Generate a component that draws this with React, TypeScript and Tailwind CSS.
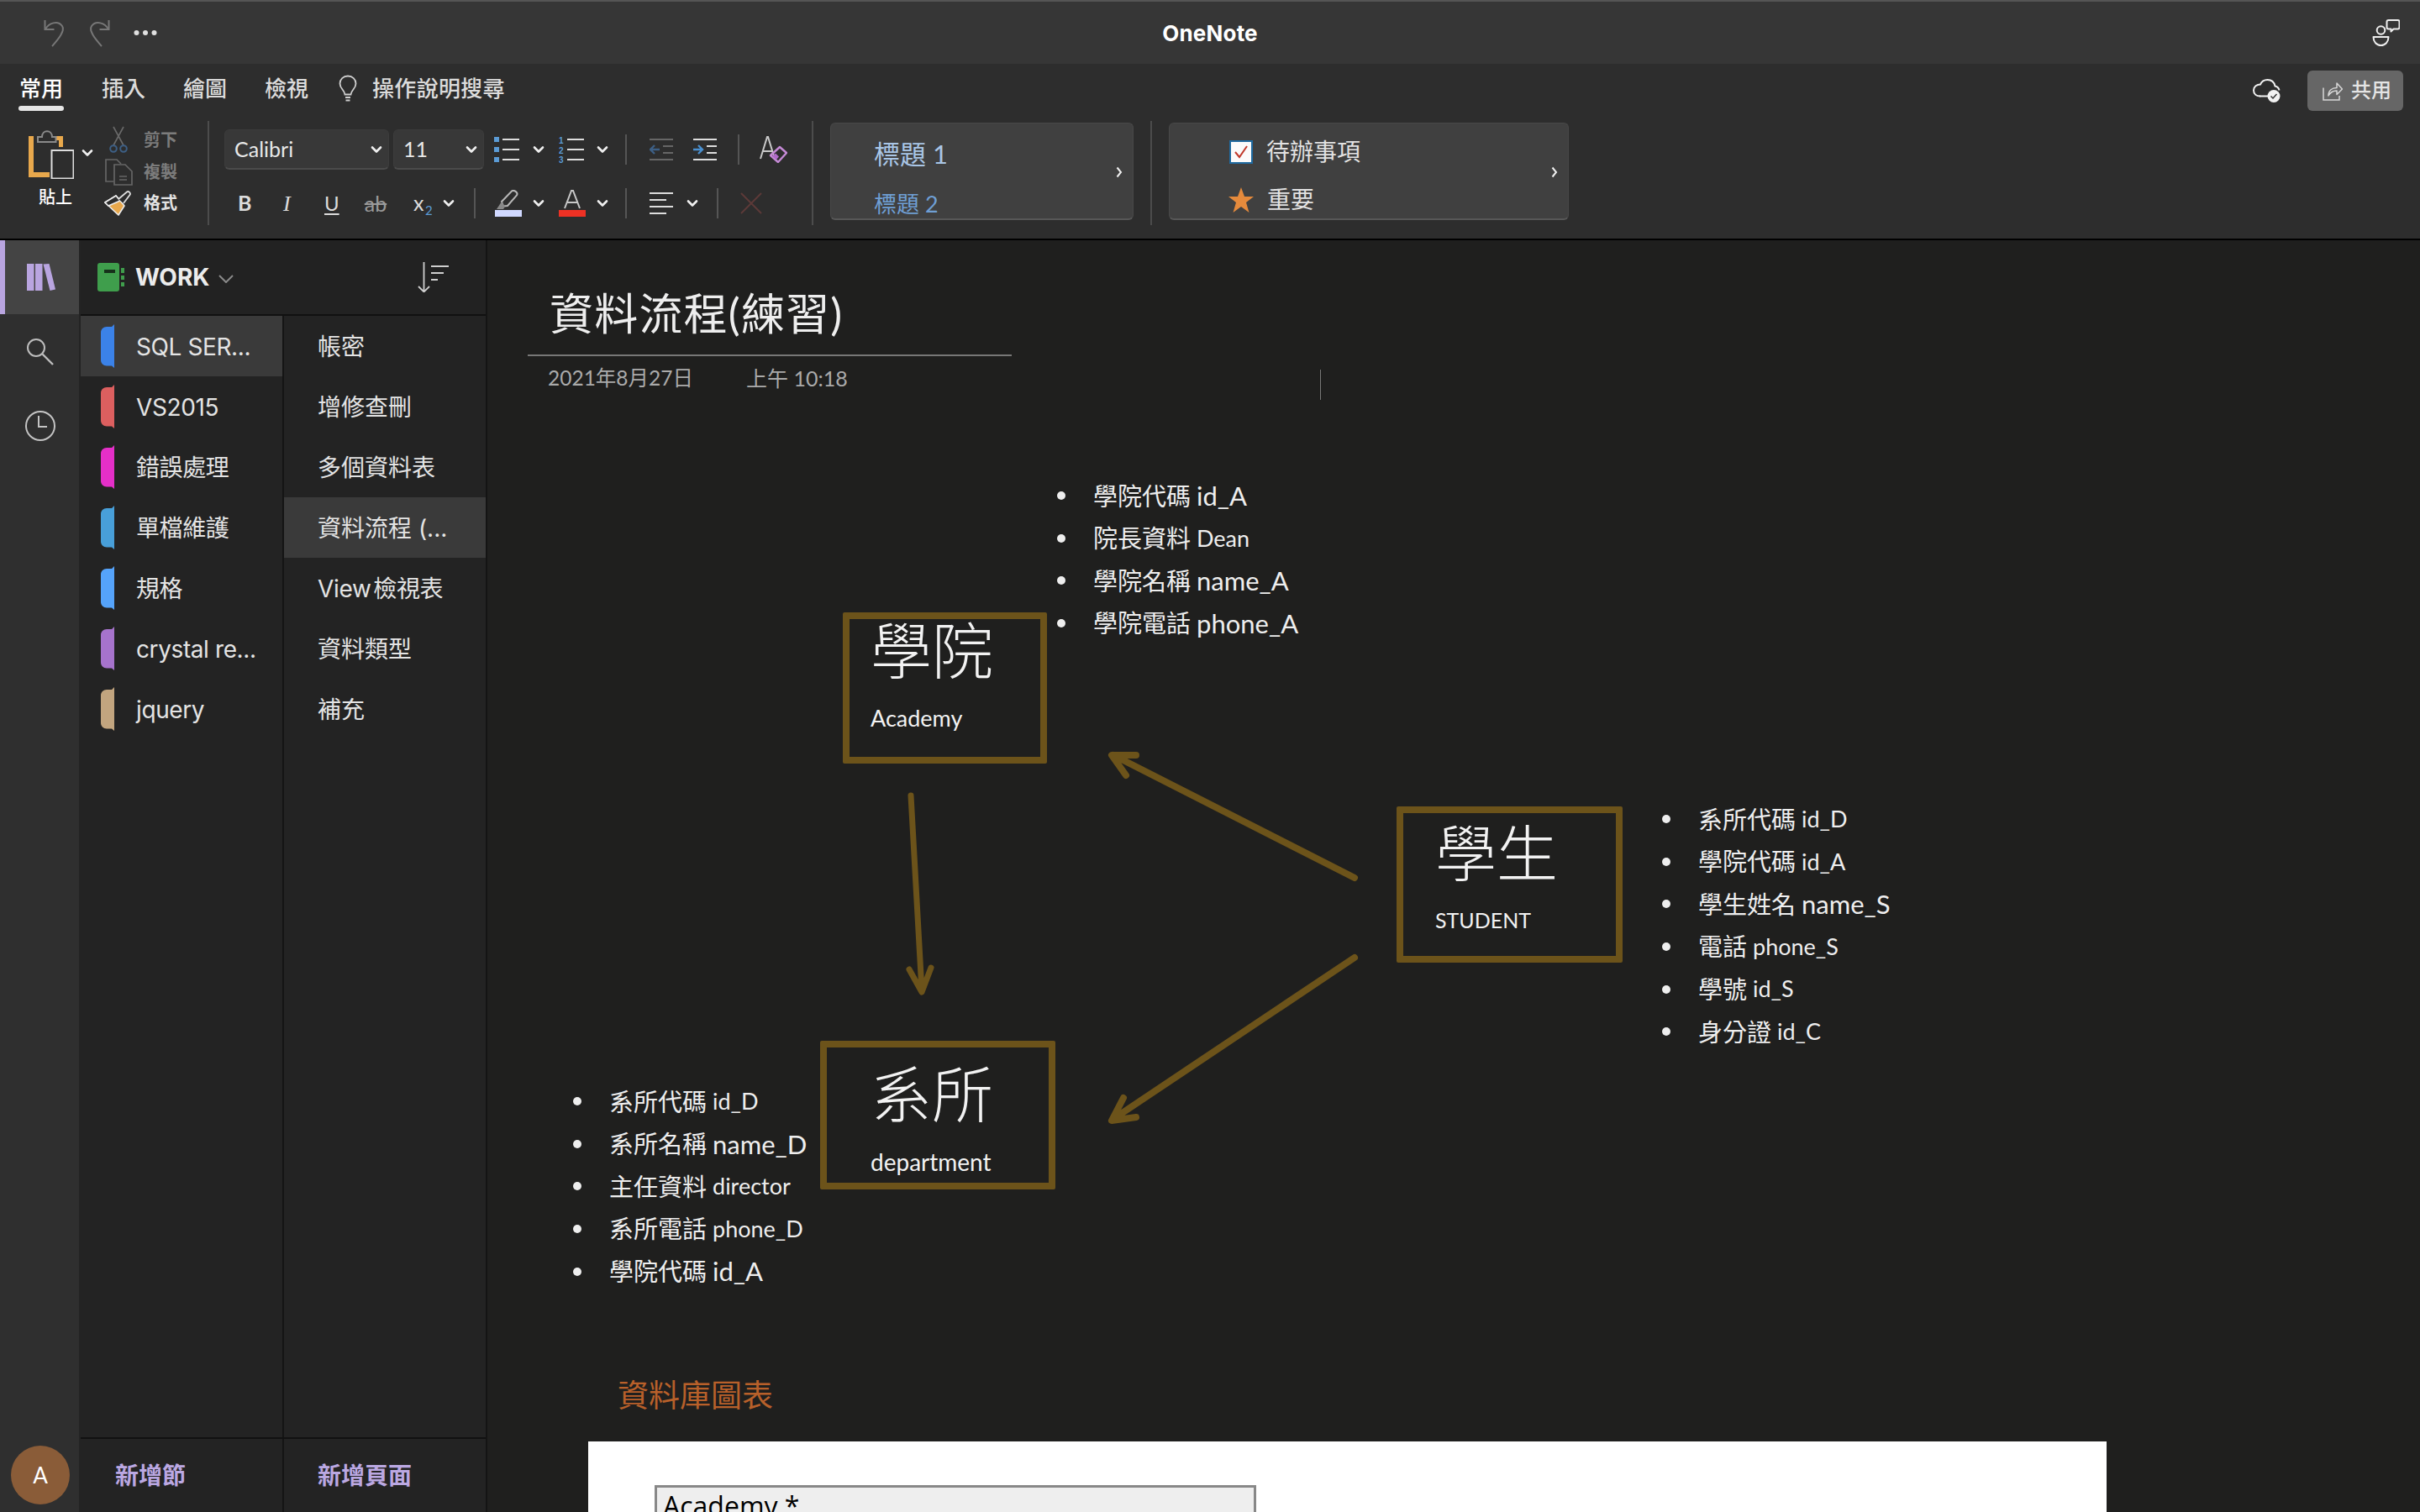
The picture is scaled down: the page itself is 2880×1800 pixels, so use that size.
import React from "react";

const Chev = ({ className = "" }: { className?: string }) => (
  <svg width="14" height="10" viewBox="0 0 14 10" className={className} fill="none" stroke="#f0f0f0" strokeWidth="2.6" strokeLinecap="round" strokeLinejoin="round">
    <path d="M2 2.5 7 7.5 12 2.5" />
  </svg>
);
const VSep = ({ className = "" }: { className?: string }) => <div className={"w-[2px] h-[36px] bg-[#555] shrink-0 " + className} />;

const Undo = ({ flip }: { flip?: boolean }) => (
  <svg width="26" height="33" viewBox="0 0 26 33" fill="none" stroke="#777" strokeWidth="2" className={flip ? "-scale-x-100" : ""}>
    <path d="M1.5 1v11h11" />
    <path d="M2 12C6 4 17 1 22 8c4 6-6 17-12 24" />
  </svg>
);

function TitleBar() {
  return (
    <div className="relative h-[76px] shrink-0 bg-[#363636] border-t-2 border-[#555] flex items-center pl-[52px] pr-[24px]">
      <Undo />
      <div className="ml-[27px]"><Undo flip /></div>
      <svg width="28" height="8" viewBox="0 0 28 8" className="ml-[28px]" fill="#e0e0e0">
        <circle cx="3.5" cy="4" r="3" /><circle cx="14" cy="4" r="3" /><circle cx="24.5" cy="4" r="3" />
      </svg>
      <div className="absolute left-0 right-0 text-center text-[26px] font-bold text-white tracking-[0.2px]">OneNote</div>
      <div className="flex-1" />
      <svg width="33" height="33" viewBox="0 0 33 33" fill="none" stroke="#eee" strokeWidth="2">
        <circle cx="10.5" cy="13" r="4.8" />
        <path d="M1.5 21h18c0 6-4 10-9 10s-9-4-9-10Z" strokeLinejoin="round" />
        <path d="M19.5 1h11a2 2 0 0 1 2 2v6.500a2 2 0 0 1-2 2h-5l-3 3v-3h-3a2 2 0 0 1-2-2V3a2 2 0 0 1 2-2Z" strokeLinejoin="round" />
      </svg>
    </div>
  );
}

function Tabs() {
  return (
    <div className="h-[68px] shrink-0 flex items-start pt-[13px] text-[26px] leading-[34px] font-medium text-[#dcdcdc] relative">
      <div className="ml-[22px] w-[54px] flex flex-col items-center text-white">
        <span>常用</span>
        <div className="w-[54px] h-[6px] rounded-full bg-[#e6e6e6] mt-[3px]" />
      </div>
      <span className="ml-[45px]">插入</span>
      <span className="ml-[45px]">繪圖</span>
      <span className="ml-[45px]">檢視</span>
      <svg width="24" height="32" viewBox="0 0 24 32" className="ml-[35px]" fill="none" stroke="#cfcfcf" strokeWidth="1.8">
        <path d="M12 1.500c-5.500 0-9.500 4-9.500 9 0 6 5.500 7.500 6 13h7c.5-5.500 6-7 6-13 0-5-4-9-9.500-9Z" />
        <path d="M9 27h6M9.500 30.500h5" strokeWidth="2" />
      </svg>
      <span className="ml-[17px] tracking-[0.3px]">操作說明搜尋</span>
      <div className="absolute right-[20px] top-[8px] flex items-center">
        <svg width="36" height="30" viewBox="0 0 36 30" fill="none">
          <path d="M10 21.500c-4.500 0-8-2.500-8-7s4-7 8-7c1.500-3.500 4.500-5.500 8.500-5.500 5 0 8 3 9 7.500 2.500.5 4.500 2 5 5" stroke="#f2f2f2" strokeWidth="2" />
          <path d="M9 21.500h14" stroke="#f2f2f2" strokeWidth="2" />
          <circle cx="26" cy="21.500" r="7.500" fill="#f2f2f2" />
          <path d="M22.500 21.500l2.500 2.500 4.500-5" stroke="#333" strokeWidth="1.500" />
        </svg>
        <div className="ml-[30px] w-[114px] h-[48px] rounded-[6px] bg-[#666] flex items-center pl-[18px] text-[24px] text-[#e4e4e4] font-medium">
          <svg width="24" height="24" viewBox="0 0 24 24" fill="none" stroke="#d8d8d8" strokeWidth="1.500">
            <path d="M1 8.500V23h19v-5" />
            <path d="M7 18c0-6 4-9.500 10-9.500V3l6.500 7-6.500 6.500V12c-4 0-7.500 1.500-10 6Z" strokeLinejoin="round" />
          </svg>
          <span className="ml-[10px]">共用</span>
        </div>
      </div>
    </div>
  );
}

function Clipboard() {
  return (
    <div className="flex pl-[34px] w-[247px] shrink-0 h-[124px]">
      <div className="w-[54px] flex flex-col mt-[10px]">
        <svg width="54" height="59" viewBox="0 0 54 59" fill="none">
          <path d="M0 8h6v43h19v6H0Z M28 8h13v13h-5v-8h-8Z" fill="#e8a84c" />
          <path d="M11 15V9h5c0-9 12-9 12 0h4.500v6Z" stroke="#8a8a8a" strokeWidth="2" fill="#2d2d2d" />
          <rect x="27.500" y="25" width="26" height="33.500" fill="#2d2d2d" stroke="#dedede" strokeWidth="2" />
        </svg>
        <div className="mt-[11px] ml-[12px] text-[20px] leading-[22px] font-medium text-white whitespace-nowrap">貼上</div>
      </div>
      <Chev className="ml-[9px] mt-[33px]" />
      <div className="ml-[14px] flex flex-col w-[90px] mt-[3px]">
        <div className="h-[39px] flex items-center">
          <svg width="24" height="33" viewBox="0 0 24 33" fill="none" className="ml-[4px]">
            <path d="M6 1l12 22M18 1 6 23" stroke="#6a6a6a" strokeWidth="1.600" />
            <circle cx="6" cy="27" r="3.800" stroke="#3d5f85" strokeWidth="2" />
            <circle cx="18" cy="27" r="3.800" stroke="#3d5f85" strokeWidth="2" />
          </svg>
          <span className="ml-[18px] text-[20px] font-bold text-[#7c7c7c]">剪下</span>
        </div>
        <div className="h-[37px] flex items-center">
          <svg width="33" height="32" viewBox="0 0 33 32" fill="none" stroke="#666" strokeWidth="1.700">
            <path d="M10 27H1V1h13l5 5" />
            <path d="M11 7h13l8 8v16H11Z" />
            <path d="M17 21h9M17 25h9" />
          </svg>
          <span className="ml-[13px] text-[20px] font-bold text-[#7c7c7c]">複製</span>
        </div>
        <div className="h-[37px] flex items-center -ml-[1px]">
          <svg width="33" height="30" viewBox="0 0 33 30" fill="none">
            <path d="M1 14 14 6l10 12-7 11Z" fill="#e8a84c" stroke="#eee" strokeWidth="1.600" strokeLinejoin="round" />
            <path d="M1 14 14 6l5 6L5 18Z" fill="#2d2d2d" stroke="#eee" strokeWidth="1.600" />
            <path d="M17 10 27 1.500c2-1.500 5 1.500 3.500 3.500L23 15" fill="#2d2d2d" stroke="#ddd" strokeWidth="1.800" />
          </svg>
          <span className="ml-[14px] text-[20px] font-bold text-[#e2e2e2]">格式</span>
        </div>
      </div>
    </div>
  );
}

const Combo = ({ w, label }: { w: string; label: string }) => (
  <div className={"h-[48px] rounded-[6px] bg-[#383838] border border-[#3c3c3c] border-b-2 border-b-[#4b4b4b] flex items-center justify-between pl-[11px] pr-[7px] text-[25px] text-[#e8e8e8] font-['Lato','Noto_Sans',sans-serif] " + w}>
    <span>{label}</span>
    <Chev />
  </div>
);

function BulletList() {
  return (
    <svg width="34" height="30" viewBox="0 0 34 30">
      <path d="M0 0h6v6H0zM0 12h6v6H0zM0 24h6v6H0z" fill="#5b9bd5" />
      <path d="M10 3h20M10 15h20M10 27h20" stroke="#ddd" strokeWidth="2" />
    </svg>
  );
}
function NumList() {
  return (
    <svg width="34" height="32" viewBox="0 0 34 32">
      <text x="0" y="9" fontSize="10" fontWeight="700" fontFamily="Liberation Sans" fill="#5b9bd5">1</text>
      <text x="0" y="21" fontSize="10" fontWeight="700" fontFamily="Liberation Sans" fill="#5b9bd5">2</text>
      <text x="0" y="32" fontSize="10" fontWeight="700" fontFamily="Liberation Sans" fill="#5b9bd5">3</text>
      <path d="M10 4h20M10 16h20M10 28h20" stroke="#ddd" strokeWidth="2" />
    </svg>
  );
}
const Indent = ({ out }: { out?: boolean }) => (
  <svg width="28" height="26" viewBox="0 0 28 26" fill="none">
    <g stroke={out ? "#666" : "#ddd"} strokeWidth="2">
      <path d="M0 1h28M0 25h28M16 9h12M16 17h12" />
    </g>
    {out ? (
      <path d="M12 13H1M6 8 1 13l5 5" stroke="#3d5f85" strokeWidth="2.400" />
    ) : (
      <path d="M0 13h11M6 8l5 5-5 5" stroke="#4a90d0" strokeWidth="2.400" />
    )}
  </svg>
);

function FontRows() {
  return (
    <div className="flex flex-col w-[698px] ml-[18px] mr-[1px] shrink-0 pt-[10px]">
      <div className="flex items-center h-[48px]">
        <Combo w="w-[196px]" label="Calibri" />
        <Combo w="w-[108px] ml-[5px]" label="11" />
        <div className="ml-[12px]"><BulletList /></div>
        <Chev className="ml-[12px]" />
        <div className="ml-[17px]"><NumList /></div>
        <Chev className="ml-[11px]" />
        <VSep className="ml-[20px]" />
        <div className="ml-[27px]"><Indent out /></div>
        <div className="ml-[24px]"><Indent /></div>
        <VSep className="ml-[25px]" />
        <svg width="33" height="32" viewBox="0 0 33 32" fill="none" className="ml-[24px]">
          <path d="M1 27 9 1h1l8 26M4 18h11" stroke="#c9c9c9" strokeWidth="2" />
          <path d="M13 23 24 13l8 7-10 11Z" stroke="#c58ad6" strokeWidth="2.400" strokeLinejoin="round" />
          <path d="M15 24l4-3.500 4 4-3 3.500Z" fill="#b06ac8" />
        </svg>
      </div>
      <div className="flex items-center h-[36px] mt-[22px] text-[#dcdcdc]">
        <span className="ml-[16px] w-[16px] text-[25px] font-bold font-['Lato',sans-serif]">B</span>
        <span className="ml-[38px] w-[14px] text-[26px] italic font-['Liberation_Serif',serif]">I</span>
        <span className="ml-[35px] w-[18px] text-[24px] underline underline-offset-[3px] font-['Lato',sans-serif]">U</span>
        <span className="ml-[27px] w-[32px] text-[25px] line-through text-[#9a9a9a] font-['Lato',sans-serif] text-center leading-none">ab</span>
        <span className="ml-[29px] w-[18px] text-[25px] font-['Lato',sans-serif] relative">x<span className="absolute left-[14px] top-[16px] text-[15px] text-[#5b9bd5]">2</span></span>
        <Chev className="ml-[17px]" />
        <VSep className="ml-[23px]" />
        <svg width="32" height="32" viewBox="0 0 32 32" fill="none" className="ml-[23px]">
          <path d="M8 14 20 1.500c3-2 8 2 6 5L15 19l-5 .5Z" stroke="#b8b8b8" strokeWidth="2" />
          <path d="M2 23l6-9 4 6-2 3Z" fill="#888" />
          <rect x="0" y="24" width="32" height="8" fill="#d0d8ff" />
        </svg>
        <Chev className="ml-[13px]" />
        <svg width="32" height="32" viewBox="0 0 32 32" fill="none" className="ml-[17px]">
          <path d="M7 22 15 1h2l8 21M10 15h12" stroke="#c8c8c8" strokeWidth="2" />
          <rect x="0" y="24" width="32" height="8" fill="#ee3124" />
        </svg>
        <Chev className="ml-[13px]" />
        <VSep className="ml-[20px]" />
        <svg width="28" height="26" viewBox="0 0 28 26" className="ml-[27px]" stroke="#ddd" strokeWidth="2">
          <path d="M0 1h28M0 9h20M0 17h28M0 25h20" />
        </svg>
        <Chev className="ml-[16px]" />
        <VSep className="ml-[22px]" />
        <svg width="26" height="26" viewBox="0 0 26 26" className="ml-[26px]" fill="none" stroke="#5c3a38" strokeWidth="2">
          <path d="M1 1l24 24M25 1 1 25" />
        </svg>
      </div>
    </div>
  );
}

const GalleryBox = ({ w, children }: { w: string; children: React.ReactNode }) => (
  <div className={"relative h-[116px] mt-[2px] rounded-[6px] bg-[#404040] border border-[#484848] border-b-2 border-b-[#575757] overflow-hidden shrink-0 " + w}>
    {children}
    <svg width="8" height="14" viewBox="0 0 8 14" fill="none" stroke="#f0f0f0" strokeWidth="2" className="absolute right-[12px] top-[51px]">
      <path d="M1.500 1.500 6 7l-4.500 5.500" />
    </svg>
  </div>
);

function ToolRow() {
  return (
    <div className="h-[124px] flex shrink-0">
      <Clipboard />
      <div className="w-[2px] h-[124px] bg-[#4c4c4c] shrink-0" />
      <FontRows />
      <div className="w-[2px] h-[124px] bg-[#4c4c4c] shrink-0" />
      <div className="ml-[20px]">
        <GalleryBox w="w-[361px]">
          <div className="pl-[51px] pt-[14px] text-[31px] leading-[44px] text-[#a9c6e6] font-['Lato','Noto_Sans_CJK_TC',sans-serif]">標題 1</div>
          <div className="pl-[51px] pt-[20px] text-[27px] leading-[36px] text-[#6f9fd4] font-['Lato','Noto_Sans_CJK_TC',sans-serif]">標題 2</div>
        </GalleryBox>
      </div>
      <div className="ml-[20px] w-[2px] h-[124px] bg-[#4c4c4c] shrink-0" />
      <div className="ml-[20px]">
        <GalleryBox w="w-[476px]">
          <div className="flex items-center pl-[71px] pt-[15px] h-[52px] text-[28px] text-[#e2e2e2]">
            <svg width="28" height="28" viewBox="0 0 28 28" fill="none">
              <rect x="1" y="1" width="26" height="26" fill="#fbfbfb" stroke="#1f6aa0" strokeWidth="2" />
              <path d="M7 14l5 6 9-13" stroke="#c0392b" strokeWidth="2" />
            </svg>
            <span className="ml-[16px]">待辦事項</span>
          </div>
          <div className="flex items-center pl-[70px] mt-[21px] h-[36px] text-[28px] text-[#e2e2e2]">
            <svg width="30" height="30" viewBox="0 0 30 30" fill="#e58a3c">
              <path d="M15 0l4 11h11l-9 7 3.500 12L15 23 5.500 30 9 18l-9-7h11Z" />
            </svg>
            <span className="ml-[16px]">重要</span>
          </div>
        </GalleryBox>
      </div>
    </div>
  );
}

function Rail() {
  return (
    <div className="w-[94px] shrink-0 bg-[#2f2f2f] flex flex-col">
      <div className="h-[88px] bg-[#444] border-l-[6px] border-[#b9a5e0] flex items-center pl-[26px]">
        <svg width="34" height="32" viewBox="0 0 34 32" fill="#b9a5e0">
          <rect x="0" y="0" width="8.500" height="32" />
          <rect x="10" y="0" width="8.500" height="32" />
          <path d="M19.500 0.500 26.500 0 34 30.500 27.500 32Z" />
        </svg>
      </div>
      <div className="mt-[28px] pl-[2px] flex justify-center">
        <svg width="34" height="34" viewBox="0 0 34 34" fill="none" stroke="#bdbdbd" strokeWidth="2">
          <circle cx="12" cy="12" r="10" />
          <path d="M19.500 19.500 32 32" strokeWidth="2.400" />
        </svg>
      </div>
      <div className="mt-[52px] pl-[2px] flex justify-center">
        <svg width="38" height="38" viewBox="0 0 38 38" fill="none" stroke="#c4c4c4" strokeWidth="2">
          <circle cx="19" cy="19" r="17" />
          <path d="M17 7v13h10" />
        </svg>
      </div>
      <div className="mt-auto mb-[9px] ml-[13px] w-[70px] h-[70px] rounded-full bg-[#8a5c38] flex items-center justify-center text-white text-[26px] font-['Lato',sans-serif]">A</div>
    </div>
  );
}

const sections = [
  { n: "SQL SER...", c: "#3b82e8" },
  { n: "VS2015", c: "#dc5f5f" },
  { n: "錯誤處理", c: "#e52fc8" },
  { n: "單檔維護", c: "#489fd9" },
  { n: "規格", c: "#55a3fa" },
  { n: "crystal re...", c: "#a673cc" },
  { n: "jquery", c: "#c2a57f" },
];
const pages = ["帳密", "增修查刪", "多個資料表", "資料流程 (...", "View 檢視表", "資料類型", "補充"];

function Sidebar() {
  return (
    <div className="w-[486px] shrink-0 flex flex-col border-r-2 border-[#141414] bg-[#232323]">
      <div className="h-[90px] shrink-0 flex items-center pl-[20px] bg-[#222] border-b-2 border-[#111] ml-[2px]">
        <svg width="32" height="34" viewBox="0 0 32 34" fill="none">
          <rect x="0" y="0" width="26" height="34" rx="3" fill="#3f9e4c" />
          <rect x="8" y="8" width="13" height="4" fill="#16301a" />
          <path d="M28 6h4v6h-4zM28 15h4v5h-4zM28 23h4v5h-4z" fill="#3f9e4c" />
        </svg>
        <span className="ml-[13px] text-[28px] font-bold text-[#ececec]">WORK</span>
        <svg width="18" height="10" viewBox="0 0 18 10" fill="none" stroke="#8a8a8a" strokeWidth="2" className="ml-[11px] mt-[3px]">
          <path d="M1 1l8 8 8-8" />
        </svg>
        <svg width="38" height="36" viewBox="0 0 38 36" fill="none" stroke="#cfcfcf" strokeWidth="1.800" className="ml-[219px]">
          <path d="M7.500 0v35M1 29l6.500 6.500L14 29M16 5h21M16 13h15M16 21h8" />
        </svg>
      </div>
      <div className="flex-1 flex min-h-0">
        <div className="w-[242px] ml-[2px] shrink-0 border-r-2 border-[#141414] text-[28px] text-[#e4e4e4] tracking-[-0.4px]">
          {sections.map((s, i) => (
            <div key={s.n} className={"h-[72px] flex items-center pl-[24px] " + (i === 0 ? "bg-[#3a3a3a]" : "")}>
              <svg width="16" height="52" viewBox="0 0 16 52" fill={s.c} className="shrink-0">
                <path d="M16 0v52l-3-2.500H7c-4 0-7-3-7-7V10c0-4 3-7 7-7h6Z" />
              </svg>
              <span className="ml-[26px] pt-[2px] whitespace-nowrap">{s.n}</span>
            </div>
          ))}
        </div>
        <div className="flex-1 text-[28px] text-[#e4e4e4]">
          {pages.map((p, i) => (
            <div key={p} className={"h-[72px] flex items-center pl-[40px] pt-[2px] whitespace-nowrap " + (i === 3 ? "bg-[#3a3a3a]" : "") + (i === 4 ? " [word-spacing:-5px] tracking-[-0.3px]" : "")}>{p}</div>
          ))}
        </div>
      </div>
      <div className="h-[89px] shrink-0 flex border-t-2 border-[#111] ml-[2px] text-[28px] font-bold text-[#bba8e2]">
        <div className="w-[242px] border-r-2 border-[#141414] pl-[41px] flex items-center">新增節</div>
        <div className="pl-[40px] flex items-center">新增頁面</div>
      </div>
    </div>
  );
}

type Item = [string, string, boolean];
const BulletUl = ({ items, className }: { items: Item[]; className: string }) => (
  <ul className={"absolute " + className}>
    {items.map(([a, b, small]) => (
      <li key={a + b} className="h-[50.6px] flex items-center text-[29px] text-[#eee] whitespace-nowrap">
        <span className="w-[10px] h-[10px] rounded-full bg-[#eee] mr-[33px]" />
        <span>{a}</span>
        <span className={"ml-[7px] " + (small ? "text-[27px]" : "text-[31px]")}>{b}</span>
      </li>
    ))}
  </ul>
);

function Note() {
  return (
    <div className="relative flex-1 bg-[#1f1f1e] overflow-hidden font-['Lato','Noto_Sans_CJK_TC',sans-serif]">
      <div className="absolute left-[74px] top-[57px] text-[52px] leading-[60px] tracking-[1.2px] text-[#eee] whitespace-nowrap">資料流程(練習)</div>
      <div className="absolute left-[48px] top-[136px] w-[576px] h-[2px] bg-[#777]" />
      <div className="absolute left-[72px] top-[149px] text-[24.5px] leading-[30px] text-[#aaa]">2021年8月27日</div>
      <div className="absolute left-[308px] top-[149px] text-[25px] leading-[30px] text-[#aaa]">上午 10:18</div>
      <div className="absolute left-[991px] top-[154px] w-[1px] h-[36px] bg-[#777]" />

      <BulletUl className="left-[678px] top-[279px]" items={[["學院代碼", "id_A", false], ["院長資料", "Dean", true], ["學院名稱", "name_A", false], ["學院電話", "phone_A", false]]} />
      <BulletUl className="left-[102px] top-[1000px]" items={[["系所代碼", "id_D", true], ["系所名稱", "name_D", false], ["主任資料", "director", true], ["系所電話", "phone_D", true], ["學院代碼", "id_A", false]]} />
      <BulletUl className="left-[1398px] top-[664px]" items={[["系所代碼", "id_D", true], ["學院代碼", "id_A", true], ["學生姓名", "name_S", false], ["電話", "phone_S", true], ["學號", "id_S", true], ["身分證", "id_C", true]]} />

      <div className="absolute left-[423px] top-[443px] w-[243px] h-[180px] border-[8px] border-[#6c531a] rounded-[2px] pl-[25px] text-[#f2f2f2]">
        <div className="mt-[1px] text-[73px] leading-[72px] font-light">學院</div>
        <div className="mt-[27px] text-[27px] leading-[36px]">Academy</div>
      </div>
      <div className="absolute left-[396px] top-[953px] w-[280px] h-[177px] border-[8px] border-[#6c531a] rounded-[2px] pl-[52px] text-[#f2f2f2]">
        <div className="mt-[19px] text-[73px] leading-[72px] font-light">系所</div>
        <div className="mt-[27px] text-[28px] leading-[36px]">department</div>
      </div>
      <div className="absolute left-[1082px] top-[674px] w-[269px] h-[186px] border-[8px] border-[#6c531a] rounded-[2px] pl-[38px] text-[#f2f2f2]">
        <div className="mt-[11px] text-[73px] leading-[72px] font-light">學生</div>
        <div className="mt-[26px] text-[25px] leading-[36px]">STUDENT</div>
      </div>

      <svg className="absolute left-0 top-0" width="2300" height="1514" viewBox="0 0 2300 1514" fill="none" stroke="#6c531a" strokeWidth="8" strokeLinecap="round" strokeLinejoin="round">
        <path d="M504 661 517 893M502 868l15 27 11-29" strokeWidth="7" />
        <path d="M1032 759 745 613M760 637 743 613h29" />
        <path d="M1032 854 745 1046M757 1021l-14 27 29-4" />
      </svg>

      <div className="absolute left-[155px] top-[1353px] text-[37px] leading-[44px] text-[#b8602a]">資料庫圖表</div>

      <div className="absolute left-[120px] top-[1430px] w-[1807px] h-[84px] bg-white pt-[52px] pl-[79px]">
        <div className="w-[716px] h-[40px] bg-[#eee] border-[3px] border-b-0 border-[#888] pl-[7px] text-[32px] leading-[44px] text-black font-['Open_Sans',sans-serif] overflow-hidden">Academy *</div>
      </div>
    </div>
  );
}

export default function App() {
  return (
    <div className="w-[2880px] h-[1800px] flex flex-col overflow-hidden bg-[#1f1f1e] font-['Inter','Noto_Sans_CJK_TC',sans-serif]">
      <TitleBar />
      <div className="h-[210px] shrink-0 bg-[#2d2d2d] border-b-2 border-black flex flex-col">
        <Tabs />
        <ToolRow />
      </div>
      <div className="flex-1 flex min-h-0">
        <Rail />
        <Sidebar />
        <Note />
      </div>
    </div>
  );
}
